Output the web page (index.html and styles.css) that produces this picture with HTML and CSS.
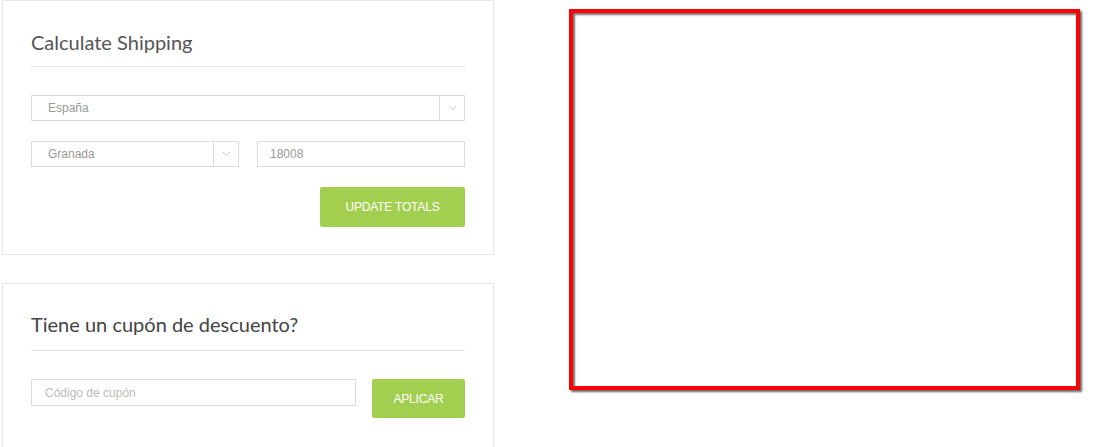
FILE: index.html
```html
<!DOCTYPE html>
<html lang="es">
<head>
    <meta charset="UTF-8">
    <meta name="viewport" content="width=device-width, initial-scale=1.0">
    <title>Carrito</title>
    <link rel="stylesheet" href="styles.css">
</head>
<body>
    <div class="page">
        <div class="left-col">
            <div class="card card-shipping">
                <h3 class="card-title">Calculate Shipping</h3>
                <div class="rule"></div>

                <div class="select full">
                    <span class="select-value">España</span>
                    <span class="select-arrow">
                        <svg width="9" height="6" viewBox="0 0 9 6"><path d="M1 1l3.5 3.5L8 1" fill="none" stroke="#c8c8c8" stroke-width="1"/></svg>
                    </span>
                </div>

                <div class="row-pair">
                    <div class="select half">
                        <span class="select-value">Granada</span>
                        <span class="select-arrow">
                            <svg width="9" height="6" viewBox="0 0 9 6"><path d="M1 1l3.5 3.5L8 1" fill="none" stroke="#c8c8c8" stroke-width="1"/></svg>
                        </span>
                    </div>
                    <input type="text" class="field half zip" value="18008">
                </div>

                <div class="actions">
                    <button class="btn btn-update">UPDATE TOTALS</button>
                </div>
            </div>

            <div class="card card-coupon">
                <h3 class="card-title big">Tiene un cupón de descuento?</h3>
                <div class="rule"></div>

                <div class="coupon-row">
                    <input type="text" class="field coupon" placeholder="Código de cupón">
                    <button class="btn btn-apply">APLICAR</button>
                </div>
            </div>
        </div>

        <div class="frame-box"></div>
    </div>
</body>
</html>
```

FILE: styles.css
```css
/* Basic styling */
* {
    box-sizing: border-box;
}

body {
    margin: 0;
    padding: 0;
    background: #fff;
    font-family: 'Liberation Sans', Arial, sans-serif;
    overflow: hidden;
}

.page {
    display: flex;
    align-items: flex-start;
}

.left-col {
    width: 492px;
    margin-left: 2px;
}

.card {
    border: 1px solid #e6e6e6;
    padding: 30px 28px 27px 28px;
    background: #fff;
}

.card-coupon {
    margin-top: 28px;
    padding-top: 28px;
}

.card-title {
    margin: 0 0 12px 0;
    font-family: 'Lato', 'Open Sans', sans-serif;
    font-weight: 400;
    font-size: 20px;
    line-height: 23px;
    color: #555;
}

.card-title.big {
    font-size: 20px;
    line-height: 25px;
    margin-bottom: 13px;
    color: #444;
}

.rule {
    height: 1px;
    background: #e3e3e3;
    margin-bottom: 28px;
}

.select {
    display: flex;
    height: 26px;
    border: 1px solid #dcdcdc;
    background: #fff;
}

.select-value {
    flex: 1;
    padding-left: 16px;
    font-size: 12px;
    line-height: 24px;
    color: #999;
}

.select-arrow {
    width: 25px;
    border-left: 1px solid #dcdcdc;
    display: flex;
    align-items: center;
    justify-content: center;
}

.row-pair {
    display: flex;
    justify-content: space-between;
    margin-top: 20px;
}

.half {
    width: 208px;
}

.field {
    height: 26px;
    border: 1px solid #dcdcdc;
    padding: 0 12px;
    font-family: 'Liberation Sans', Arial, sans-serif;
    font-size: 12px;
    color: #999;
    outline: none;
    margin: 0;
}

.field::placeholder {
    color: #bbb;
}

.actions {
    display: flex;
    justify-content: flex-end;
    margin-top: 20px;
}

.btn {
    background: #a2cf50;
    color: #fff;
    border: none;
    border-radius: 2px;
    font-family: 'Liberation Sans', Arial, sans-serif;
    font-size: 12px;
    letter-spacing: -0.2px;
    cursor: pointer;
    padding: 0;
}

.btn-update {
    width: 145px;
    height: 40px;
}

.coupon-row {
    display: flex;
    align-items: flex-start;
    justify-content: space-between;
    padding-bottom: 30px;
}

.coupon {
    width: 325px;
    height: 27px;
    padding-left: 13px;
}

.btn-apply {
    width: 93px;
    height: 39px;
}

.frame-box {
    width: 511px;
    height: 381px;
    margin-left: 75px;
    margin-top: 9px;
    border: 4px solid #ff0000;
    background: #fff;
    box-shadow: 2px 2px 2px rgba(0, 0, 0, 0.6), inset 2px 2px 2px rgba(0, 0, 0, 0.55);
}
```
